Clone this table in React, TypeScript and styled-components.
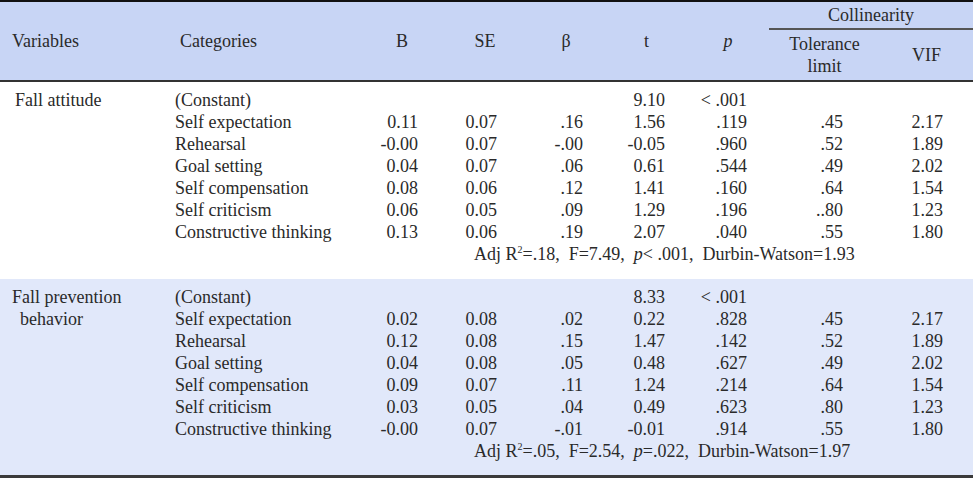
import React from "react";
import styled, { createGlobalStyle } from "styled-components";

const GlobalStyle = createGlobalStyle`
  html, body {
    margin: 0;
    padding: 0;
    background: #ffffff;
  }
  body {
    font-family: "Liberation Serif", "Times New Roman", serif;
    color: #2a2a2a;
  }
`;

const Table = styled.table`
  width: 973px;
  border-collapse: collapse;
  table-layout: fixed;
  font-family: "Liberation Serif", "Times New Roman", serif;
  font-size: 18px;
  color: #2a2a2a;
  border-top: 2px solid #111;
  border-bottom: 3px solid #3a3a3a;
`;

const Head = styled.thead`
  background: #c8d5f5;
  border-bottom: 2px solid #333;
`;

const Th = styled.th<{ $pl?: number; $align?: string }>`
  font-family: inherit;
  font-weight: normal;
  text-align: ${(p) => p.$align || "center"};
  padding: 0 0 0 ${(p) => p.$pl || 0}px;
  line-height: 22px;
  vertical-align: middle;
`;

const GroupTh = styled(Th)`
  height: 26px;
  border-bottom: 2px solid #555;
`;

const SubHeadRow = styled.tr`
  height: 52px;
`;

const Group = styled.tbody<{ $shade?: boolean }>`
  background: ${(p) => (p.$shade ? "#e1e8fa" : "#ffffff")};
  tr:first-child td {
    padding-top: 7px;
  }
`;

const Td = styled.td<{ $pl?: number; $pr?: number; $right?: boolean }>`
  font-family: inherit;
  padding: 0 ${(p) => p.$pr || 0}px 0 ${(p) => p.$pl || 0}px;
  text-align: ${(p) => (p.$right ? "right" : "left")};
  line-height: 22px;
  height: 22px;
  white-space: nowrap;
  vertical-align: top;
`;

const VarName = styled.div<{ $indent?: number }>`
  padding-left: ${(p) => p.$indent || 0}px;
`;

const SummaryCell = styled.td<{ $pb: number }>`
  font-family: inherit;
  padding: 0 0 ${(p) => p.$pb}px 114px;
  line-height: 22px;
  white-space: pre;
  text-align: left;
`;

const Em = styled.i`
  font-style: italic;
`;

const Sup = styled.sup`
  font-size: 10px;
  vertical-align: 7px;
  line-height: 0;
`;

const widths = [170, 190, 84, 82, 80, 81, 82, 111, 93];
const padRight = [26, 29, 23, 22, 22, 37, 30];

type Row = [string, string, string, string, string, string, string, string];

const attitude: Row[] = [
  ["(Constant)", "", "", "", "9.10", "< .001", "", ""],
  ["Self expectation", "0.11", "0.07", ".16", "1.56", ".119", ".45", "2.17"],
  ["Rehearsal", "-0.00", "0.07", "-.00", "-0.05", ".960", ".52", "1.89"],
  ["Goal setting", "0.04", "0.07", ".06", "0.61", ".544", ".49", "2.02"],
  ["Self compensation", "0.08", "0.06", ".12", "1.41", ".160", ".64", "1.54"],
  ["Self criticism", "0.06", "0.05", ".09", "1.29", ".196", "..80", "1.23"],
  ["Constructive thinking", "0.13", "0.06", ".19", "2.07", ".040", ".55", "1.80"],
];

const prevention: Row[] = [
  ["(Constant)", "", "", "", "8.33", "< .001", "", ""],
  ["Self expectation", "0.02", "0.08", ".02", "0.22", ".828", ".45", "2.17"],
  ["Rehearsal", "0.12", "0.08", ".15", "1.47", ".142", ".52", "1.89"],
  ["Goal setting", "0.04", "0.08", ".05", "0.48", ".627", ".49", "2.02"],
  ["Self compensation", "0.09", "0.07", ".11", "1.24", ".214", ".64", "1.54"],
  ["Self criticism", "0.03", "0.05", ".04", "0.49", ".623", ".80", "1.23"],
  ["Constructive thinking", "-0.00", "0.07", "-.01", "-0.01", ".914", ".55", "1.80"],
];

function DataRows({ rows, label }: { rows: Row[]; label: React.ReactNode }) {
  return (
    <>
      {rows.map((r, i) => (
        <tr key={i}>
          {i === 0 && (
            <Td rowSpan={rows.length} $pl={12}>
              {label}
            </Td>
          )}
          <Td $pl={5}>{r[0]}</Td>
          {r.slice(1).map((v, j) => (
            <Td key={j} $right $pr={padRight[j]}>
              {v}
            </Td>
          ))}
        </tr>
      ))}
    </>
  );
}

export default function App() {
  return (
    <>
      <GlobalStyle />
      <Table>
        <colgroup>
          {widths.map((w, i) => (
            <col key={i} style={{ width: w }} />
          ))}
        </colgroup>
        <Head>
          <tr>
            <Th rowSpan={2} $align="left" $pl={12}>
              Variables
            </Th>
            <Th rowSpan={2} $align="left" $pl={10}>
              Categories
            </Th>
            <Th rowSpan={2}>B</Th>
            <Th rowSpan={2}>SE</Th>
            <Th rowSpan={2}>β</Th>
            <Th rowSpan={2}>t</Th>
            <Th rowSpan={2}>
              <Em>p</Em>
            </Th>
            <GroupTh colSpan={2}>Collinearity</GroupTh>
          </tr>
          <SubHeadRow>
            <Th>
              Tolerance
              <br />
              limit
            </Th>
            <Th>VIF</Th>
          </SubHeadRow>
        </Head>
        <Group>
          <DataRows rows={attitude} label={<VarName $indent={3}>Fall attitude</VarName>} />
          <tr>
            <td colSpan={2} />
            <SummaryCell colSpan={7} $pb={14}>
              Adj R<Sup>2</Sup>=.18,  F=7.49,  <Em>p</Em>{"< .001,  Durbin-Watson=1.93"}
            </SummaryCell>
          </tr>
        </Group>
        <Group $shade>
          <DataRows
            rows={prevention}
            label={
              <>
                <VarName>Fall prevention</VarName>
                <VarName $indent={8}>behavior</VarName>
              </>
            }
          />
          <tr>
            <td colSpan={2} />
            <SummaryCell colSpan={7} $pb={13}>
              Adj R<Sup>2</Sup>=.05,  F=2.54,  <Em>p</Em>=.022,  Durbin-Watson=1.97
            </SummaryCell>
          </tr>
        </Group>
      </Table>
    </>
  );
}
